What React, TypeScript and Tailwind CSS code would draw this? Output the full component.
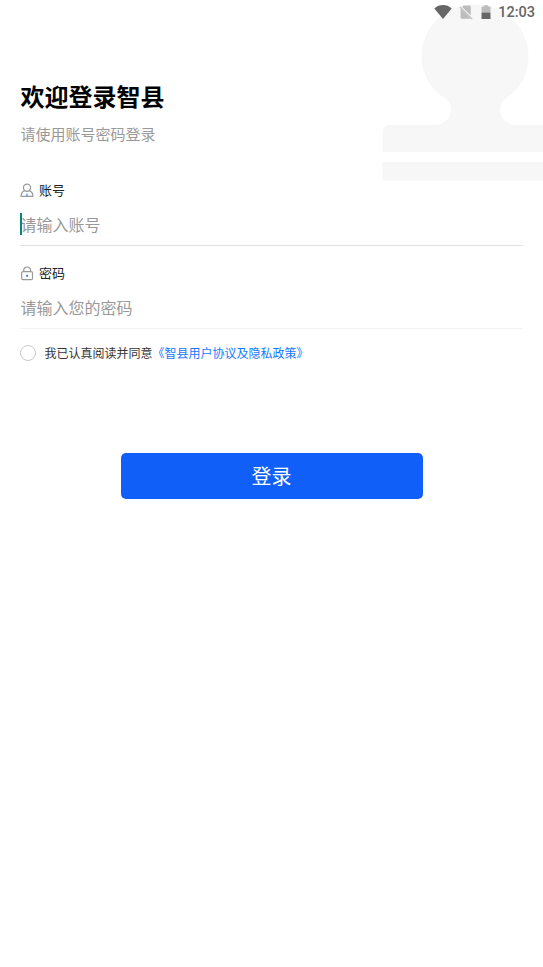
import type { ReactNode } from "react";

const StatusBar = () => {
  return (
    <div className="relative flex h-6 items-center justify-end pr-2 text-[#666]">
      <svg width="18" height="14" viewBox="0 0 18 14" className="mr-[7px]">
        <path d="M9 14 L0.3 3.4 C2.8 1.2 5.8 0 9 0 C12.2 0 15.2 1.2 17.7 3.4 Z" fill="#666" />
      </svg>
      {/* No SIM */}
      <svg width="14" height="15" viewBox="0 0 14 15" className="mr-2">
        <path
          d="M4.6 0.5 H10.5 Q11.8 0.5 11.8 1.8 V10.5 L3.1 2 Z M1.6 3.4 L11.6 13.2 Q11.2 13.8 10.4 13.8 H2.9 Q1.6 13.8 1.6 12.5 Z"
          fill="#bcbcbc"
        />
        <path d="M0.8 1.8 L13.2 14.2" stroke="#bcbcbc" strokeWidth="1.2" />
      </svg>
      {/* Battery */}
      <svg width="10" height="15" viewBox="0 0 10 15" className="mr-[7px]">
        <path d="M3 0.2 H7 V1.5 H9 Q9.5 1.5 9.5 2 V7.5 H0.5 V2 Q0.5 1.5 1 1.5 H3 Z" fill="#bcbcbc" />
        <path d="M0.5 7.5 H9.5 V14 H0.5 Z" fill="#666" />
      </svg>
      <span className="pt-px font-['Roboto',sans-serif] text-[14.5px] font-medium leading-6">12:03</span>
    </div>
  );
};

const StampBackdrop = () => {
  return (
    <svg
      className="absolute right-0 top-0"
      width="161"
      height="182"
      viewBox="0 0 161 182"
      fill="#f7f7f7"
    >
      <path d="M93 4.5 C63 4.5 39.5 27 39.5 57 C39.5 73 48.5 89 61.5 97 C66.5 100 69 104.5 69 109.5 C69 118 62 125 53 125 H8.5 Q0.5 125 0.5 133 V152 H161 V125 H134 C125 125 118 118 118 109.5 C118 104.5 121 100.5 125 97.5 C139 88 146.5 73 146.5 57 C146.5 27 123 4.5 93 4.5 Z" />
      <path d="M0.5 162 H161 V180.5 H0.5 Z" />
    </svg>
  );
};

const UserIcon = () => {
  return (
    <svg width="14" height="15" viewBox="0 0 14 15" fill="none" stroke="#999" strokeWidth="1.2">
      <circle cx="7" cy="4.7" r="3.6" />
      <path d="M4.6 7.6 C2.3 8.6 1.1 10.4 1 13.3 H13 C12.9 10.4 11.7 8.6 9.4 7.6" strokeLinejoin="round" />
      <path d="M7 10.5 V13" stroke="#4b86f7" />
    </svg>
  );
};

const LockIcon = () => {
  return (
    <svg width="14" height="15" viewBox="0 0 14 15" fill="none" stroke="#999" strokeWidth="1.2">
      <rect x="1.7" y="5.7" width="10.8" height="8" rx="1.2" />
      <path d="M3.7 5.7 V4.5 C3.7 2.4 5.1 1 7.1 1 C9.1 1 10.5 2.4 10.5 4.5 V5.7" />
      <circle cx="7.1" cy="9.8" r="1.1" fill="#3478f6" stroke="none" />
    </svg>
  );
};

type FieldProps = {
  icon: ReactNode;
  label: string;
  placeholder: string;
  focused?: boolean;
};

const Field = ({ icon, label, placeholder, focused = false }: FieldProps) => {
  return (
    <div>
      <div className="flex h-5 items-center gap-[5px] text-[13px] leading-5 text-[#222]">
        {icon}
        <span>{label}</span>
      </div>
      <div
        className={
          focused
            ? "relative mt-2 h-[38px] border-b border-[#e2e2e2]"
            : "relative mt-2 h-[38px] border-b border-[#f3f3f3]"
        }
      >
        {focused && <span className="absolute left-0 top-[5px] h-[22px] w-[2px] bg-[#00897b]" />}
        <input
          className="block h-8 w-full bg-transparent pl-[0.5px] text-base leading-8 outline-none placeholder:text-[#999]"
          placeholder={placeholder}
        />
      </div>
    </div>
  );
};

export default function App() {
  return (
    <div className="relative h-[967px] w-full overflow-hidden bg-white font-['Noto_Sans_CJK_SC',sans-serif]">
      <StampBackdrop />
      <StatusBar />

      <main className="relative px-5 pt-14">
        <h1 className="pl-[0.5px] text-2xl font-bold leading-8 text-black">欢迎登录智县</h1>
        <p className="mt-[10px] pl-[0.5px] text-[15px] leading-6 text-[#999]">请使用账号密码登录</p>

        <div className="mt-[34px] flex flex-col gap-[17px]">
          <Field icon={<UserIcon />} label="账号" placeholder="请输入账号" focused />
          <Field icon={<LockIcon />} label="密码" placeholder="请输入您的密码" />
        </div>

        {/* Agreement */}
        <div className="mt-[14px] flex h-5 items-center text-xs leading-5 text-[#333]">
          <span className="mr-[8.5px] size-4 rounded-full border border-[#c8c8c8]" />
          <span>
            我已认真阅读并同意<span className="text-[#1677ff]">《智县用户协议及隐私政策》</span>
          </span>
        </div>

        <button className="mx-auto mt-[90px] block h-[46px] w-[302px] rounded-[5px] bg-[#115ff9] text-xl leading-[46px] text-white">
          登录
        </button>
      </main>
    </div>
  );
}
